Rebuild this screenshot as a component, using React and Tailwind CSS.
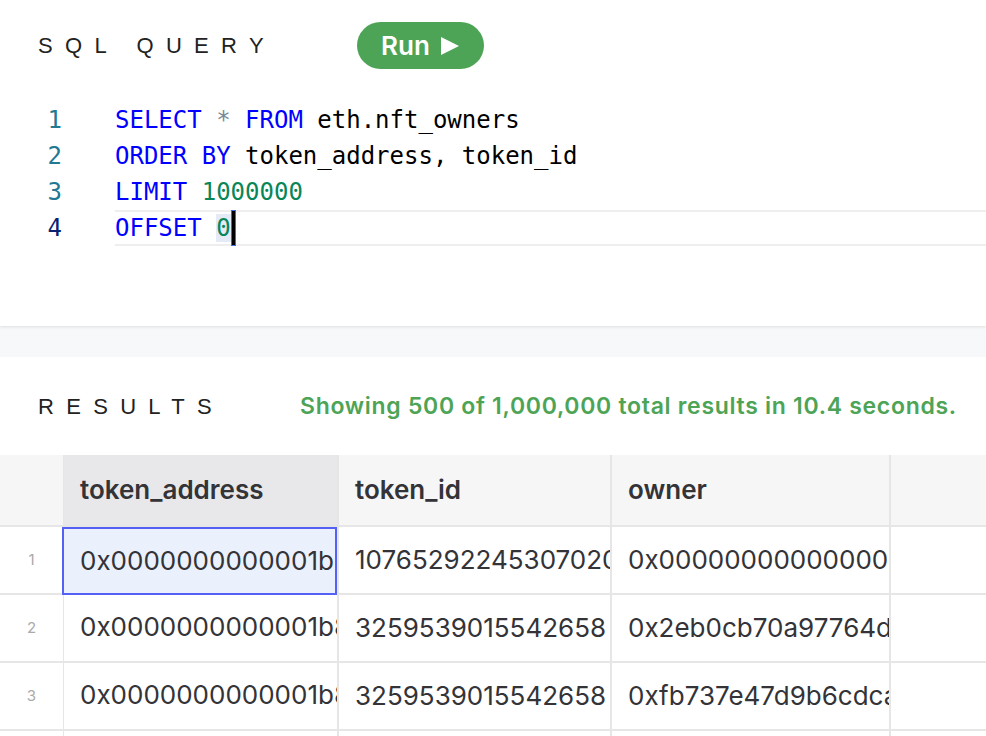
import React from "react";

const mono = { fontFamily: '"DejaVu Sans Mono", monospace' };
const label = { fontFamily: '"Liberation Sans", sans-serif' };

function CodeLine({ n, active, children }) {
    return (
        <div className="flex h-[36px]">
            <div className={`w-[62px] text-right leading-[36px] ${active ? "text-[#0b216f]" : "text-[#237893]"}`}>{n}</div>
            <div className={`ml-[53px] flex-1 leading-[32px] whitespace-pre border-y-2 ${active ? "border-[#eeeeee]" : "border-transparent"}`}>
                {children}
            </div>
        </div>
    );
}

const rows = [
    ["0x0000000000001b84b1cb32787b0d64758d019317", "107652922453070200000000", "0x000000000000000000000000000000000000dead"],
    ["0x0000000000001b84b1cb32787b0d64758d019317", "3259539015542658", "0x2eb0cb70a97764d04c2f1e8b7c0f8d3e2a6b5c11"],
    ["0x0000000000001b84b1cb32787b0d64758d019317", "3259539015542658", "0xfb737e47d9b6cdca0e2c41a8f3d5b7e9c0a1b2c3"],
    ["0x0000000000001b84b1cb32787b0d64758d019317", "3259539015542658", "0x9d1c0f3b6a2e7d5c8b4a1f0e3d2c6b5a4f3e2d1c"],
];

export default function App() {
    return (
        <div className="w-[986px] h-[736px] overflow-hidden bg-white" style={{ fontFamily: 'Inter, "Liberation Sans", sans-serif' }}>
            {/* query section */}
            <div className="relative z-10 h-[326px] bg-white shadow-[0_1px_3px_rgba(0,0,0,0.10)]">
                <div className="flex items-center pt-[22px] pl-[38px]">
                    <span className="w-[319px] text-[22px] tracking-[12.3px] text-[#222]" style={label}>SQL QUERY</span>
                    <button className="flex h-[47px] w-[127px] items-center justify-center gap-[10px] rounded-full bg-[#4ea456] text-[26px] font-semibold text-white">
                        Run
                        <svg width="20" height="20" viewBox="0 0 20 20"><path d="M1 1 L19 10 L1 19 Z" fill="white" /></svg>
                    </button>
                </div>
                <div className="mt-[33px] text-[24px]" style={mono}>
                    <CodeLine n="1">
                        <span className="text-[#0000ff]">SELECT</span> <span className="text-[#778899]">*</span> <span className="text-[#0000ff]">FROM</span> <span className="text-black">eth.nft_owners</span>
                    </CodeLine>
                    <CodeLine n="2">
                        <span className="text-[#0000ff]">ORDER BY</span> <span className="text-black">token_address, token_id</span>
                    </CodeLine>
                    <CodeLine n="3">
                        <span className="text-[#0000ff]">LIMIT</span> <span className="text-[#098658]">1000000</span>
                    </CodeLine>
                    <CodeLine n="4" active>
                        <span className="text-[#0000ff]">OFFSET</span> <span className="bg-[#e5ebf6] text-[#098658]">0</span>
                        <span className="inline-block h-[36px] w-[5px] -my-[2px] align-top border-[1.5px] border-[#3b6be0] bg-black"></span>
                    </CodeLine>
                </div>
            </div>

            <div className="h-[31px] bg-[#f7f8fa]"></div>

            {/* results */}
            <div className="flex h-[98px] items-center pl-[38px]">
                <span className="w-[262px] text-[22px] tracking-[12.3px] text-[#222]" style={label}>RESULTS</span>
                <span className="text-[23px] tracking-[0.7px] font-semibold text-[#4ea456]">Showing 500 of 1,000,000 total results in 10.4 seconds.</span>
            </div>

            <div className="grid grid-cols-[63px_274px_273px_279px_1fr] text-[26px] text-[#333338]">
                <div className="h-[72px] bg-[#f6f6f6] border-b-2 border-[#e6e6e6]"></div>
                <div className="h-[72px] bg-[#e8e8ea] border-b-2 border-l border-[#e6e6e6] pl-[16px] leading-[70px] font-semibold">token_address</div>
                <div className="h-[72px] bg-[#f6f6f6] border-b-2 border-l-2 border-[#e6e6e6] pl-[16px] leading-[70px] font-semibold">token_id</div>
                <div className="h-[72px] bg-[#f6f6f6] border-b-2 border-l-2 border-[#e6e6e6] pl-[16px] leading-[70px] font-semibold">owner</div>
                <div className="h-[72px] bg-[#f6f6f6] border-b-2 border-l-2 border-[#e6e6e6]"></div>

                {rows.map((r, i) => (
                    <React.Fragment key={i}>
                        <div className="h-[68px] border-b-2 border-[#e6e6e6] flex items-center justify-center text-[15px] text-[#aaaaaa]">{i + 1}</div>
                        <div className={`h-[68px] overflow-hidden whitespace-nowrap pl-[16px] leading-[64px] ${i === 0 ? "border-2 border-[#5561f5] bg-[#ebf1fc] pl-[15px] -ml-px" : "border-b-2 border-l border-[#e6e6e6]"}`}>{r[0]}</div>
                        <div className="h-[68px] overflow-hidden whitespace-nowrap pl-[16px] leading-[66px] border-b-2 border-l-2 border-[#e6e6e6]">{r[1]}</div>
                        <div className="h-[68px] overflow-hidden whitespace-nowrap pl-[16px] leading-[66px] border-b-2 border-l-2 border-[#e6e6e6]">{r[2]}</div>
                        <div className="h-[68px] border-b-2 border-l-2 border-[#e6e6e6]"></div>
                    </React.Fragment>
                ))}
            </div>
        </div>
    );
}
